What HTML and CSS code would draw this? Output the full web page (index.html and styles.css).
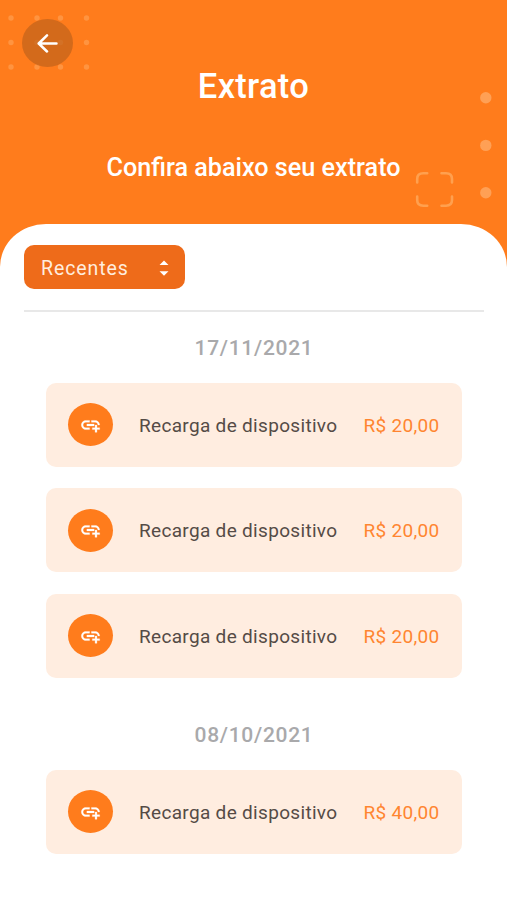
FILE: index.html
```html
<!DOCTYPE html>
<html lang="pt-BR">
<head>
    <meta charset="UTF-8">
    <meta name="viewport" content="width=device-width, initial-scale=1.0">
    <title>Extrato</title>
    <link rel="stylesheet" href="styles.css">
</head>
<body>
    <svg class="symbols">
        <symbol id="add-link" viewBox="0 0 24 24">
            <path d="M8 11h8v2H8zm12.1 1H22c0-2.76-2.24-5-5-5h-4v1.9h4c1.71 0 3.1 1.39 3.1 3.1zM3.9 12c0-1.71 1.39-3.1 3.1-3.1h4V7H7c-2.76 0-5 2.24-5 5s2.24 5 5 5h4v-1.9H7c-1.71 0-3.1-1.39-3.1-3.1zM19 12h-2v3h-3v2h3v3h2v-3h3v-2h-3z"/>
        </symbol>
    </svg>

    <header class="header">
        <svg class="decoration" width="507" height="270" viewBox="0 0 507 270">
            <g fill="#ff9440">
                <circle cx="11" cy="18" r="2.7"/>
                <circle cx="37" cy="18" r="2.7"/>
                <circle cx="60.5" cy="18" r="2.7"/>
                <circle cx="86.5" cy="18" r="2.7"/>
                <circle cx="11" cy="42.5" r="2.7"/>
                <circle cx="37" cy="42.5" r="2.7"/>
                <circle cx="60.5" cy="42.5" r="2.7"/>
                <circle cx="86.5" cy="42.5" r="2.7"/>
                <circle cx="11" cy="67" r="2.7"/>
                <circle cx="37" cy="67" r="2.7"/>
                <circle cx="60.5" cy="67" r="2.7"/>
                <circle cx="86.5" cy="67" r="2.7"/>
            </g>
            <g fill="#ffa055">
                <circle cx="485.8" cy="97.8" r="5.7"/>
                <circle cx="485.8" cy="145.4" r="5.7"/>
                <circle cx="485.8" cy="192.8" r="5.7"/>
            </g>
            <path class="frame" d="M417.2 182.500v-3.500q0-5.700 6-5.700h4M441.500 173.300h4.500q6 0 6 5.700v3.500M452 196.500v3.500q0 5.700-6 5.700h-4.500M427.200 205.700h-4q-6 0-6-5.700v-3.500"/>
        </svg>
        <button type="button" class="back-button" aria-label="Voltar">
            <svg width="22" height="22" viewBox="0 0 22 22">
                <path d="M19.500 11.500H2.500M10 3.300L1.700 11.500l8.300 8"/>
            </svg>
        </button>
        <h1 class="title">Extrato</h1>
        <p class="subtitle">Confira abaixo seu extrato</p>
    </header>

    <main class="panel">
        <div class="filter">
            <button type="button" class="select">
                <span>Recentes</span>
                <svg width="10" height="16" viewBox="0 0 10 16">
                    <path d="M.5 5L5 .5 9.500 5zM.5 11.300L5 15.800l4.500-4.500z"/>
                </svg>
            </button>
        </div>

        <section class="group">
            <h2 class="date">17/11/2021</h2>
            <div class="card">
                <span class="icon"><svg><use href="#add-link"/></svg></span>
                <span class="description">Recarga de dispositivo</span>
                <span class="value">R$ 20,00</span>
            </div>
            <div class="card">
                <span class="icon"><svg><use href="#add-link"/></svg></span>
                <span class="description">Recarga de dispositivo</span>
                <span class="value">R$ 20,00</span>
            </div>
            <div class="card">
                <span class="icon"><svg><use href="#add-link"/></svg></span>
                <span class="description">Recarga de dispositivo</span>
                <span class="value">R$ 20,00</span>
            </div>
        </section>

        <section class="group">
            <h2 class="date">08/10/2021</h2>
            <div class="card">
                <span class="icon"><svg><use href="#add-link"/></svg></span>
                <span class="description">Recarga de dispositivo</span>
                <span class="value">R$ 40,00</span>
            </div>
        </section>
    </main>
</body>
</html>
```
FILE: styles.css
```css
* {
    box-sizing: border-box;
}
body {
    margin: 0;
    height: 900px;
    overflow: hidden;
    font-family: Roboto, "Liberation Sans", sans-serif;
    background-color: #ff7c1c;
    display: flex;
    flex-direction: column;
}
h1, h2, p {
    margin: 0;
}
button {
    border: none;
    font-family: inherit;
    cursor: pointer;
}
.symbols {
    display: none;
}
.header {
    position: relative;
    height: 224px;
    flex-shrink: 0;
    padding: 19px 22px 0;
    color: #fff;
}
/* Dots and frame behind the header content */
.decoration {
    position: absolute;
    top: 0;
    left: 0;
}
.frame {
    fill: none;
    stroke: #ffa04f;
    stroke-width: 2.6;
    stroke-linecap: round;
}
.back-button {
    position: relative;
    display: flex;
    align-items: center;
    justify-content: center;
    width: 51px;
    height: 48px;
    padding: 0;
    border-radius: 50%;
    background-color: rgba(192, 98, 27, 0.7);
}
.back-button path {
    fill: none;
    stroke: #fff;
    stroke-width: 2.5;
    stroke-linecap: round;
    stroke-linejoin: round;
}
.title {
    margin-top: -1px;
    font-size: 34.5px;
    line-height: 40px;
    font-weight: 500;
    letter-spacing: 0.3px;
    text-align: center;
}
.subtitle {
    margin-top: 47px;
    font-size: 25.2px;
    line-height: 30px;
    font-weight: 500;
    text-align: center;
}
.panel {
    flex: 1;
    padding: 21px 23px 0 24px;
    background-color: #fff;
    border-radius: 46px 46px 0 0 / 43px 43px 0 0;
}
.filter {
    padding-bottom: 21px;
    border-bottom: 2px solid #e8e8e8;
}
.select {
    display: flex;
    align-items: center;
    justify-content: space-between;
    width: 161px;
    height: 44px;
    padding: 2px 16px 0 17px;
    border-radius: 10px;
    background-color: #ee6b1a;
    color: #ffeddf;
    font-size: 19.5px;
    letter-spacing: 0.9px;
}
.select path {
    fill: #fff;
}
.group {
    padding: 0 22px;
    margin-bottom: 43px;
}
.date {
    padding-top: 22px;
    margin-bottom: 20.5px;
    font-size: 21px;
    line-height: 28px;
    font-weight: 500;
    letter-spacing: 0.7px;
    text-align: center;
    color: #a9a9ab;
}
.group + .group .date {
    padding-top: 0;
    margin-bottom: 21px;
}
.card {
    display: flex;
    align-items: center;
    height: 84px;
    padding: 0 22.5px 0 22px;
    margin-bottom: 21.5px;
    border-radius: 10px;
    background-color: #ffede0;
    font-size: 19px;
    letter-spacing: 0.32px;
}
.card:last-child {
    margin-bottom: 0;
}
.icon {
    display: flex;
    align-items: center;
    justify-content: center;
    width: 45px;
    height: 43px;
    margin-right: 26px;
    border-radius: 50%;
    background-color: #ff7c1c;
}
.icon svg {
    width: 23px;
    height: 22px;
    fill: #fff;
    stroke: #fff;
    stroke-width: 0.3px;
}
.description {
    flex: 1;
    padding-top: 1px;
    white-space: nowrap;
    color: #554b46;
}
.value {
    padding-top: 1px;
    color: #ff8530;
    white-space: nowrap;
}
```
